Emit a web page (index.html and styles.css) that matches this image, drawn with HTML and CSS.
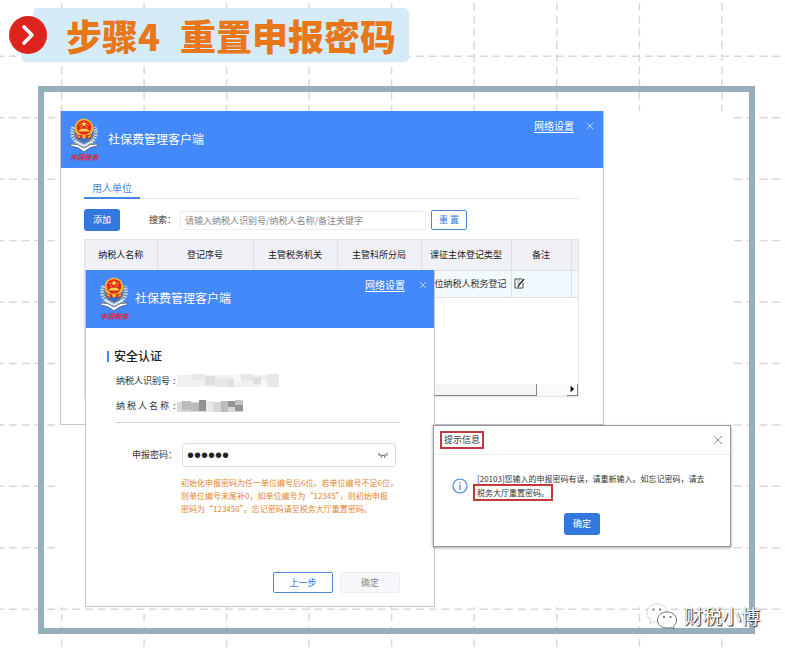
FILE: index.html
```html
<!DOCTYPE html>
<html lang="zh-CN">
<head>
<meta charset="utf-8">
<title>步骤4 重置申报密码</title>
<link rel="stylesheet" href="styles.css">
</head>
<body>
<svg class="backdrop" aria-hidden="true">
  <g stroke="#d8d8d8" stroke-width="1.4" stroke-dasharray="7.8 4.92" stroke-dashoffset="3.72">
    <path d="M0 56.3H2000M0 117.7H2000M0 179.2H2000M0 240.6H2000M0 302H2000M0 363.5H2000M0 425H2000M0 486.3H2000M0 547.8H2000M0 609.2H2000"/>
  </g>
  <g stroke="#d8d8d8" stroke-width="1.4" stroke-dasharray="7.8 4.92">
    <path d="M61.6 3V2000M144.1 3V2000M226.6 3V2000M309.1 3V2000M391.6 3V2000M474.1 3V2000M556.8 3V2000M639.4 3V2000M721.9 3V2000"/>
  </g>
</svg>
<svg class="defs" aria-hidden="true">
  <symbol id="emblem" viewBox="0 0 28 35">
    <path d="M3 10C-1 18 3 27 14 30C25 27 29 18 25 10" fill="#3d6fc4"/>
    <path d="M3.5 9C0 17 4 25 14 28C24 25 28 17 24.500 9" fill="none" stroke="#ccd3d4" stroke-width="4" stroke-dasharray="1.8 .9"/>
    <path d="M5.500 11C3 18 7 23 14 25C21 23 25 18 22.500 11" fill="none" stroke="#8a968f" stroke-width="1.200" stroke-dasharray="1.500 1"/>
    <path d="M0 26Q8 25 14 30Q20 25 28 26L27 28Q19 29 14 34Q9 29 1 28Z" fill="#fff" stroke="#42556f" stroke-width=".8"/>
    <path d="M5 23L14 28L23 23" fill="none" stroke="#e9edf0" stroke-width="1.500"/>
    <circle cx="14" cy="10" r="9.400" fill="#f0b536"/>
    <circle cx="14" cy="9.500" r="7.300" fill="#e42a16"/>
    <path d="M14 3.200L14.800 5.100L16.800 5.200L15.300 6.500L15.800 8.400L14 7.300L12.200 8.400L12.700 6.500L11.200 5.200L13.200 5.100Z" fill="#ffe05a"/>
    <path d="M9.500 6.500h1.300M17.200 6.500h1.300M10.500 9h1.200M16.300 9h1.200" stroke="#ffe05a"/>
    <path d="M9 13.500V12H10L11 10.700H17L18 12H19V13.500Z" fill="#ffd34d"/>
    <path d="M6 16Q10 18 14 17Q18 18 22 16L20 21Q14 19 8 21Z" fill="#d92a18"/>
    <path d="M7 17.500L10 19.500M21 17.500L18 19.500" stroke="#f5c242" stroke-width="1.300"/>
    <circle cx="14" cy="18.500" r="2" fill="#f2b632"/>
  </symbol>
  <symbol id="close" viewBox="0 0 10 10"><path d="M1 1L9 9M9 1L1 9" fill="none" stroke="currentColor"/></symbol>
</svg>

<header class="step">
  <span class="step-arrow"><svg viewBox="0 0 38 38" aria-hidden="true"><circle cx="19" cy="19" r="19" fill="#dc241c"/><path d="M15 11L23 19L15 27" fill="none" stroke="#fff" stroke-width="3.600" stroke-linecap="round" stroke-linejoin="round"/></svg></span>
  <h1><span>步骤4</span><span>重置申报密码</span></h1>
</header>

<main class="frame">
  <div class="canvas">
    <section class="window client">
      <header class="bar">
        <div class="logo"><svg viewBox="0 0 28 35" aria-hidden="true"><use href="#emblem"/></svg><span>中国税务</span></div>
        <h2>社保费管理客户端</h2>
        <a href="#">网络设置</a>
        <button class="x" aria-label="关闭"><svg><use href="#close"/></svg></button>
      </header>
      <div class="client-body">
        <nav class="tabs"><a href="#">用人单位</a></nav>
        <div class="tools">
          <button class="btn primary">添加</button>
          <label for="search">搜索：</label>
          <input id="search" type="text" placeholder="请输入纳税人识别号/纳税人名称/备注关键字">
          <button class="btn outline">重 置</button>
        </div>
        <div class="grid">
          <table>
            <colgroup><col class="c1"><col class="c2"><col class="c3"><col class="c3"><col class="c4"><col class="c5"><col class="c6"></colgroup>
            <thead><tr><th>纳税人名称</th><th>登记序号</th><th>主管税务机关</th><th>主管科所分局</th><th>课征主体登记类型</th><th>备注</th><th></th></tr></thead>
            <tbody><tr><td></td><td></td><td></td><td></td><td>单位纳税人税务登记</td><td class="note"><svg viewBox="0 0 11 11" aria-hidden="true"><path d="M8 1H1V10H9V5" fill="#fff" stroke="#444"/><path d="M3 3h3M3 5h2" stroke="#999"/><path d="M10 1L5 7L4 9" fill="none" stroke="#26365a" stroke-width="1.600"/></svg></td><td></td></tr></tbody>
          </table>
          <div class="scroll"><span class="thumb"></span><span class="arrow"><svg viewBox="0 0 11 11" aria-hidden="true"><path d="M4 2L8 5.500L4 9Z"/></svg></span></div>
        </div>
      </div>
    </section>

    <section class="window login">
      <header class="bar">
        <div class="logo"><svg viewBox="0 0 28 35" aria-hidden="true"><use href="#emblem"/></svg><span>中国税务</span></div>
        <h2>社保费管理客户端</h2>
        <a href="#">网络设置</a>
        <button class="x" aria-label="关闭"><svg><use href="#close"/></svg></button>
      </header>
      <form class="login-body">
        <h3>安全认证</h3>
        <div class="info">
          <p><span>纳税人识别号</span><span>:</span><svg class="mask-id" viewBox="0 0 102 13" aria-hidden="true"><path d="M0 1H102V13H0Z" fill="#f1f1f1"/><path d="M14 0h14v6H14zM38 4h13v9H38zM64 0h12v7H64zM90 0h12v13H90z" fill="#e8e8e8"/><path d="M28 2h10v9H28zM51 5h6v8H51zM76 3h8v7H76z" fill="#dfdfdf"/><path d="M57 1h7v7H57zM84 6h6v7H84z" fill="#f8f8f8"/></svg></p>
          <p><span>纳 税 人 名 称</span><span>:</span><svg class="mask-name" viewBox="0 0 66 12" aria-hidden="true"><path d="M0 2H66V12H0Z" fill="#d8d8d8"/><path d="M5 1h9v9H5zM14 3h8v8H14z" fill="#bbb"/><path d="M22 0h7v11H22z" fill="#929292"/><path d="M29 1h7v11H29z" fill="#e9e9e9"/><path d="M44 1h7v11H44z" fill="#bdbdbd"/><path d="M51 1h7v6H51zM58 5h8v6H58z" fill="#969696"/><path d="M58 0h8v5H58z" fill="#c4c4c4"/></svg></p>
        </div>
        <div class="field">
          <label for="pwd">申报密码：</label>
          <div class="pwd"><input id="pwd" type="password" value="123456"><svg viewBox="0 0 12 7" aria-hidden="true"><path d="M1 1Q6 6 11 1M1.500 4L2.800 2.500M4 6L4.600 3.500M8 6L7.400 3.500M10.500 4L9.200 2.500" fill="none" stroke="#666"/></svg></div>
        </div>
        <p class="hint">初始化申报密码为任一单位编号后6位。若单位编号不足6位，<br>则单位编号末尾补0，如单位编号为“12345”，则初始申报<br>密码为“123450”。忘记密码请至税务大厅重置密码。</p>
        <div class="actions"><button type="button" class="btn outline">上一步</button><button type="button" class="btn muted">确定</button></div>
      </form>
    </section>

    <section class="alert">
      <header><h4 class="mark">提示信息</h4><button class="x" aria-label="关闭"><svg><use href="#close"/></svg></button></header>
      <div class="message">
        <svg viewBox="0 0 16 16" aria-hidden="true"><circle cx="8" cy="8" r="7" fill="none" stroke="#3d86e0" stroke-width="1.200"/><path d="M8 6.500V12M8 4V5.300" stroke="#3d86e0" stroke-width="1.200"/></svg>
        <p>[20103]您输入的申报密码有误，请重新输入。如忘记密码，请去<br><span class="mark">税务大厅重置密码。</span></p>
      </div>
      <button class="btn primary">确定</button>
    </section>
  </div>
  <div class="watermark">
    <svg viewBox="0 0 32 27" aria-hidden="true"><path d="M11 1C5 1 1 5 1 10C1 13 3 16 5 17L4 21L8 18.500Q13 20 17 17.500Q21 14 21 9Q20 1 11 1Z" fill="#fff" stroke="#aaa" stroke-width=".7" stroke-dasharray="2 1"/><path d="M21 9C15 9 11.500 12.500 11.500 17C11.500 23 18 26.500 25 24.500L28 26L27.500 23C30 21 31 19 30.500 16C29.500 11.500 26 9 21 9Z" fill="#fff" stroke="#555" stroke-width=".8"/><circle cx="7.500" cy="6.500" r="1.100" fill="#666"/><circle cx="14" cy="6.500" r="1.100" fill="#666"/><circle cx="18" cy="14" r="1" fill="#555"/><circle cx="24.500" cy="14" r="1" fill="#555"/></svg>
    <span>财税小博</span>
  </div>
</main>
</body>
</html>
```
FILE: styles.css
```css
* { box-sizing: border-box; }
body, h1, h2, h3, h4, p { margin: 0; font-weight: 400; }
body {
  background: #fff;
  color: #333;
  font: 9px/12px "Noto Sans CJK SC", sans-serif;
}
button, input { font: inherit; color: inherit; padding: 0; margin: 0; background: none; border: 0; }
svg { display: block; flex: none; }
.backdrop { position: absolute; inset: 0; width: 100%; height: 100%; z-index: -1; }
.defs { position: absolute; width: 0; height: 0; }

.step { display: flex; align-items: center; padding: 8px 0 0 9px; }
.step-arrow { z-index: 1; width: 38px; }
.step h1 {
  display: flex;
  gap: 20px;
  margin-left: -26px;
  padding: 0 13px 0 45px;
  color: #e8771a;
  background: #d5ebf8;
  font-size: 36px;
  font-weight: 900;
  line-height: 54px;
  border-radius: 5px;
  clip-path: polygon(14px 0, 100% 0, 100% 100%, 0 100%, 0 44px);
}

.frame { position: relative; margin: 24px 30px 0 38px; padding: 19px 16px 21px 12px; border: 6px solid #97aebd; }
.canvas { display: grid; background: #fff; align-items: start; justify-items: start; }
.canvas > * { grid-area: 1 / 1; background: #fff; }
.window { border: 1px solid #c4c8cd; border-top: 0; }
.client { width: 544px; margin-left: 4px; }
.login { width: 350px; margin: 159px 0 0 29px; }

.bar { display: flex; align-items: flex-start; height: 57px; padding: 7px 9px 0; color: #fff; background: #4489fa; }
.logo { width: 29px; text-align: center; }
.logo svg { width: 28px; height: 35px; }
.logo span { display: block; color: #dc2438; font-size: 7px; font-weight: 700; font-style: italic; line-height: 9px; white-space: nowrap; }
.bar h2 { margin: 12px auto 0 9px; font-size: 12px; line-height: 18px; }
.bar a { color: #fff; font-size: 10px; line-height: 16px; text-underline-offset: 2px; }
.x { width: 8px; height: 8px; }
.x svg { width: 100%; height: 100%; }
.bar .x { margin: 4px 0 0 12px; color: #d5e4fc; }
.login .bar { height: 58px; padding: 7px 7px 0 14px; }
.login .bar h2 { margin-left: 6px; }
.login .bar .x { margin-left: 14px; }

.client-body { padding: 12px 24px 27px 23px; }
.tabs { display: flex; border-bottom: 1px solid #e5e6e8; }
.tabs a { padding: 0 8px 2px; border-bottom: 2px solid #4387e0; color: #4387e0; font-size: 10px; line-height: 15px; text-decoration: none; margin-bottom: -1px; }
.tools { display: flex; align-items: center; margin: 10px 0 8px; }
.tools label { margin: 0 4px 0 29px; }
.tools input { width: 246px; height: 19px; padding: 0 4px; border: 1px solid #eee; border-radius: 2px; }
.tools input::placeholder { color: #888; opacity: 1; }
.btn { width: 36px; height: 22px; border-radius: 3px; line-height: 12px; }
.primary { background: #3478de; color: #fff; }
.outline { border: 1px solid #4b87d8; color: #3478de; background: #fff; border-radius: 2px; }
.tools .outline { height: 20px; margin-left: 5px; }

.grid { display: flex; flex-direction: column; height: 158px; border: 1px solid #dfe2e8; }
table { width: 100%; table-layout: fixed; border-collapse: collapse; }
.c1 { width: 72px; } .c2 { width: 96px; } .c3 { width: 84px; } .c4 { width: 90px; } .c5 { width: 60px; } .c6 { width: 7px; }
th, td { padding: 0; text-align: center; font-weight: 400; white-space: nowrap; border-right: 1px solid #dce0e8; border-bottom: 1px solid #dce0e8; }
th { height: 30px; background: #f0f1f6; color: #222; }
td { height: 27px; background: #f2f9ff; }
th:last-child, td:last-child { border-right: 0; }
.note svg { width: 11px; height: 11px; margin-left: 2px; }
.scroll { display: flex; justify-content: space-between; height: 12px; margin-top: auto; background: #fafafa; }
.thumb { width: 452px; background: #f4f4f4; border: solid #888; border-width: 0 1px 1px 0; }
.arrow { width: 11px; border: solid #888; border-width: 0 1px 1px 0; }

.login-body { padding: 19px 34px 13px 21px; }
.login h3 { display: flex; align-items: center; gap: 5px; color: #222; font-size: 12px; font-weight: 500; line-height: 18px; }
.login h3::before { content: ""; width: 2px; height: 11px; background: #4489fa; }
.info { margin-left: 9px; padding: 9px 0 10px; border-bottom: 1px dotted #bbb; }
.info p { display: flex; align-items: center; height: 13px; }
.info p + p { margin-top: 12px; }
.info p span:first-child { width: 57px; white-space: nowrap; }
.info p span + span { width: 4px; }
.mask-id { width: 102px; height: 13px; }
.mask-name { width: 66px; height: 12px; }
.field { display: flex; align-items: center; margin: 20px 4px 0 25px; }
.field label { flex: none; width: 50px; }
.pwd { flex: 1; min-width: 0; display: flex; align-items: center; height: 24px; padding: 0 6px 0 4px; border: 1px solid #ddd; border-radius: 3px; }
.pwd input { flex: 1; min-width: 0; height: 20px; font: 20px/20px "Liberation Sans", sans-serif; color: #222; }
.pwd svg { width: 12px; height: 7px; }
.hint { margin: 9px -6px 0 74px; color: #e58430; font-size: 8px; line-height: 13px; white-space: nowrap; }
.actions { display: flex; justify-content: flex-end; gap: 7px; margin-top: 57px; }
.actions .btn { width: 60px; height: 21px; }
.muted { background: #f7f8fb; border: 1px solid #eceef2; color: #888; }

.alert { width: 298px; margin: 314px 0 0 377px; padding-bottom: 11px; border: 1px solid #999; box-shadow: 0 1px 3px rgba(0, 0, 0, .35); text-align: center; font-size: 8px; }
.alert header { display: flex; align-items: center; justify-content: space-between; height: 29px; padding: 0 7px 0 6px; border-bottom: 1px solid #eee; }
.alert header .x { width: 10px; height: 10px; color: #999; }
.mark { outline: 2px solid #c2383c; outline-offset: -2px; padding: 3px 4px; }
.alert h4 { font-size: 9px; }
.message { display: flex; align-items: center; gap: 9px; margin: 17px 0 13px 18px; text-align: left; line-height: 14px; }
.message svg { width: 16px; height: 16px; }
.message .mark { margin-left: -4px; }
.alert .primary { font-size: 9px; }

.watermark { position: absolute; right: -11px; bottom: -2px; display: flex; align-items: center; gap: 6px; color: #fff; font-size: 19px; line-height: 28px; text-shadow: 1px 1px 1px #222, 0 0 1px #777; }
.watermark svg { width: 32px; height: 27px; }
```
